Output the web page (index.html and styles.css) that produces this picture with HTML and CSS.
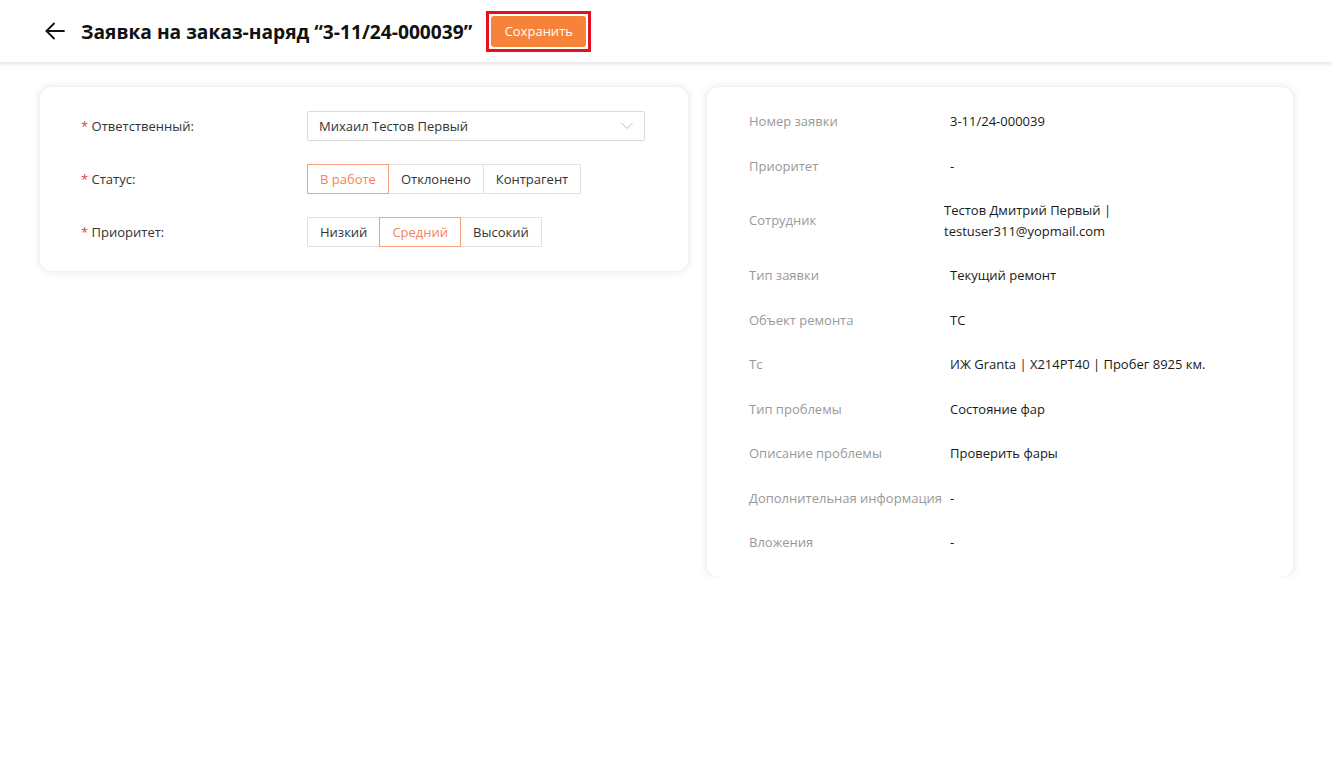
FILE: index.html
```html
<!DOCTYPE html>
<html lang="ru">
<head>
  <meta charset="UTF-8" />
  <meta name="viewport" content="width=device-width, initial-scale=1.0"/>
  <title>Заявка на заказ-наряд</title>
  <link rel="stylesheet" href="styles.css">
</head>
<body>
  <header class="page-header">
    <button class="back-link" aria-label="Назад">
      <svg width="20" height="18" viewBox="0 0 20 18" fill="none" stroke="#111" stroke-width="1.8" stroke-linecap="round" stroke-linejoin="round">
        <path d="M19 9H1.5"/>
        <path d="M9 1.5L1.5 9L9 16.5"/>
      </svg>
    </button>
    <h1 class="page-title">Заявка на заказ-наряд “3-11/24-000039”</h1>
    <span class="highlight">
      <button class="save-button">Сохранить</button>
    </span>
  </header>

  <main class="content">
    <section class="card form-card">
      <div class="form-row">
        <label class="form-label"><span class="required">*</span> Ответственный:</label>
        <div class="select">
          <span>Михаил Тестов Первый</span>
          <svg width="12" height="8" viewBox="0 0 12 8" fill="none" stroke="#bbb" stroke-width="1">
            <path d="M0.5 1L6 6.5L11.5 1"/>
          </svg>
        </div>
      </div>
      <div class="form-row">
        <label class="form-label"><span class="required">*</span> Статус:</label>
        <div class="segmented">
          <button class="segment active">В работе</button>
          <button class="segment">Отклонено</button>
          <button class="segment">Контрагент</button>
        </div>
      </div>
      <div class="form-row">
        <label class="form-label"><span class="required">*</span> Приоритет:</label>
        <div class="segmented">
          <button class="segment">Низкий</button>
          <button class="segment active">Средний</button>
          <button class="segment">Высокий</button>
        </div>
      </div>
    </section>

    <section class="card info-card">
      <div class="info-row">
        <div class="info-label">Номер заявки</div>
        <div class="info-value">3-11/24-000039</div>
      </div>
      <div class="info-row">
        <div class="info-label">Приоритет</div>
        <div class="info-value">-</div>
      </div>
      <div class="info-row">
        <div class="info-label">Сотрудник</div>
        <div class="info-value shifted">Тестов Дмитрий Первый |<br>testuser311@yopmail.com</div>
      </div>
      <div class="info-row">
        <div class="info-label">Тип заявки</div>
        <div class="info-value">Текущий ремонт</div>
      </div>
      <div class="info-row">
        <div class="info-label">Объект ремонта</div>
        <div class="info-value">ТС</div>
      </div>
      <div class="info-row">
        <div class="info-label">Тс</div>
        <div class="info-value">ИЖ Granta | Х214РТ40 | Пробег 8925 км.</div>
      </div>
      <div class="info-row">
        <div class="info-label">Тип проблемы</div>
        <div class="info-value">Состояние фар</div>
      </div>
      <div class="info-row">
        <div class="info-label">Описание проблемы</div>
        <div class="info-value">Проверить фары</div>
      </div>
      <div class="info-row">
        <div class="info-label">Дополнительная информация</div>
        <div class="info-value">-</div>
      </div>
      <div class="info-row">
        <div class="info-label">Вложения</div>
        <div class="info-value">-</div>
      </div>
    </section>
  </main>
</body>
</html>
```

FILE: styles.css
```css
body {
  margin: 0;
  padding: 0;
  font-family: 'Open Sans', 'Noto Sans', sans-serif;
  font-size: 13px;
  color: #222;
  background: #fff;
}

.page-header {
  height: 62px;
  display: flex;
  align-items: center;
  padding-left: 45px;
  background: #fff;
  box-shadow: 0 2px 4px rgba(0, 0, 0, 0.12);
}

.back-link {
  background: none;
  border: none;
  padding: 0;
  margin-right: 16px;
  display: flex;
  cursor: pointer;
}

.page-title {
  margin: 0 14px 0 0;
  font-size: 19.2px;
  font-weight: bold;
  color: #111;
}

/* red box round the save button */
.highlight {
  display: flex;
  padding: 2px;
  border: 3px solid #e4101f;
}

.save-button {
  width: 95px;
  height: 31px;
  background-color: #f7823a;
  color: #fff;
  border: none;
  border-radius: 3px;
  font-family: inherit;
  font-size: 13px;
  cursor: pointer;
}

.content {
  display: grid;
  grid-template-columns: 648fr 586fr;
  gap: 19px;
  align-items: start;
  padding: 25px 39px 0 40px;
}

.card {
  background: #fff;
  border-radius: 12px;
  box-shadow: 0 0 8px rgba(0, 0, 0, 0.12);
}

.form-card {
  padding: 24px 41px;
  display: flex;
  flex-direction: column;
  gap: 23px;
}

.form-row {
  display: flex;
  align-items: center;
}

.form-label {
  width: 226px;
  color: #333;
}

.required {
  color: #e4393c;
}

.select {
  width: 338px;
  height: 30px;
  box-sizing: border-box;
  border: 1px solid #dcdcdc;
  border-radius: 2px;
  padding: 0 11px;
  display: flex;
  align-items: center;
  justify-content: space-between;
  color: #333;
}

.segmented {
  display: flex;
}

.segment {
  height: 30px;
  padding: 0 12px;
  background: #fff;
  border: 1px solid #e2e2e2;
  margin-left: -1px;
  font-family: inherit;
  font-size: 13px;
  color: #333;
  cursor: pointer;
}

.segment:first-child {
  margin-left: 0;
}

.segment.active {
  border-color: #f4a27d;
  color: #f5845a;
  position: relative;
}

.info-card {
  padding: 12px 42px;
}

.info-row {
  display: flex;
  align-items: center;
  padding: 12px 0;
  line-height: 20.5px;
}

.info-label {
  width: 201px;
  flex-shrink: 0;
  color: #999;
}

.info-value {
  color: #1a1a1a;
}

.info-value.shifted {
  margin-left: -6px;
}
```
